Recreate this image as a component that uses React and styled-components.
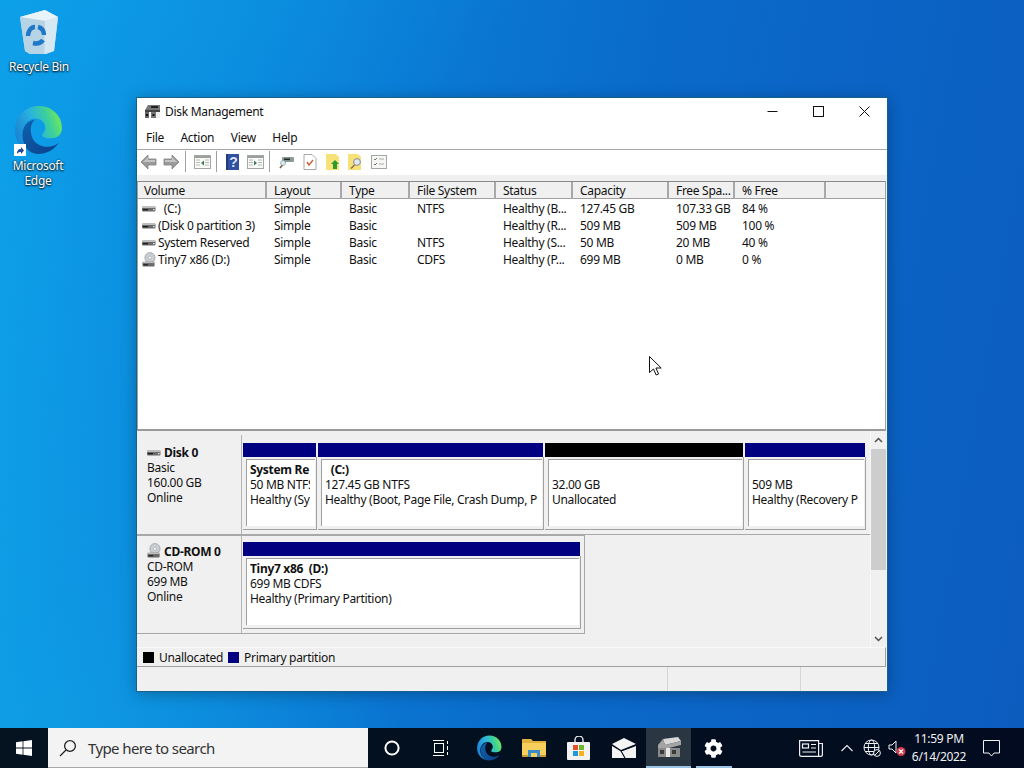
import React from 'react';
import styled, { createGlobalStyle } from 'styled-components';
import { FaCog } from 'react-icons/fa';

const GlobalStyle = createGlobalStyle`
  html, body { margin: 0; padding: 0; overflow: hidden; }
  * { box-sizing: border-box; }
`;

const UI_FONT = `"Noto Sans", "Open Sans", "Liberation Sans", sans-serif`;

const Desktop = styled.div`
  position: relative;
  width: 1024px;
  height: 768px;
  overflow: hidden;
  display: flex;
  flex-direction: column;
  font-family: ${UI_FONT};
  font-size: 12px;
  letter-spacing: -0.3px;
  color: #111;
  background:
    linear-gradient(128deg, rgba(20, 190, 240, 0.32) 0%, rgba(20, 190, 240, 0) 32%),
    linear-gradient(62deg, rgba(20, 175, 235, 0.55) 0%, rgba(20, 175, 235, 0) 30%),
    linear-gradient(100deg, #0a92e6 0%, #0a86dc 22%, #0a6aca 58%, #0c5cbe 100%);
`;

const Wallpaper = styled.div`
  flex: 1;
`;

const DesktopItem = styled.div`
  position: absolute;
  left: ${(p) => p.$x}px;
  top: ${(p) => p.$y}px;
  width: 76px;
  display: flex;
  flex-direction: column;
  align-items: center;
  text-align: center;
  color: #fff;
  line-height: 15px;
  text-shadow: 0 1px 2px rgba(0, 0, 0, 0.9), 0 0 2px rgba(0, 0, 0, 0.7);
`;

const BinLabel = styled.div`
  margin-top: 4px;
`;

const EdgeWrap = styled.div`
  position: relative;
  height: 52px;
  margin-bottom: 1px;
`;

const ShortcutBadge = styled.span`
  position: absolute;
  left: 1px;
  bottom: 1px;
  width: 12px;
  height: 12px;
  background: #fff;
  display: flex;
`;

const Window = styled.div`
  position: absolute;
  left: 136px;
  top: 97px;
  width: 752px;
  height: 595px;
  border: 1px solid #17618f;
  background: #f0f0f0;
  display: flex;
  flex-direction: column;
  box-shadow: 0 2px 14px rgba(0, 0, 0, 0.28);
`;

const TitleBar = styled.div`
  height: 27px;
  flex: none;
  background: #fff;
  display: flex;
  align-items: center;
  padding-left: 7px;
`;

const TitleText = styled.div`
  flex: 1;
  margin-left: 4px;
`;

const WinButton = styled.div`
  width: 46px;
  height: 27px;
  display: flex;
  align-items: center;
  justify-content: center;
`;

const MenuBar = styled.div`
  height: 25px;
  flex: none;
  background: #fff;
  border-bottom: 1px solid #a8a8a8;
  display: flex;
  align-items: center;
  gap: 16.5px;
  padding: 0 0 0 9px;
`;

const ToolBar = styled.div`
  height: 25px;
  flex: none;
  background: #fff;
  display: flex;
  align-items: center;
  padding: 0 0 2px 0;
`;

const Tool = styled.div`
  width: 23px;
  height: 22px;
  display: flex;
  align-items: center;
  justify-content: center;
`;

const ToolSep = styled.div`
  width: 1px;
  height: 21px;
  background: #a0a0a0;
  margin: 0 ${(p) => p.$after}px 0 ${(p) => p.$before}px;
`;

const ToolGap = styled.div`
  height: 6px;
  flex: none;
`;

const ListPane = styled.div`
  height: 250px;
  flex: none;
  background: #fff;
  border-top: 1px solid #8a8a8a;
  border-bottom: 2px solid #9a9a9a;
  border-right: 1px solid #a0a0a0;
  border-left: 1px solid #a0a0a0;
  margin-right: 1px;
`;

const COLUMNS = '129px 75px 68px 86px 77px 96px 66px 91px 1fr';

const HeaderRow = styled.div`
  display: grid;
  grid-template-columns: ${COLUMNS};
  height: 17px;
  background: #f0f0f0;
  border-bottom: 1px solid #a0a0a0;
  margin-bottom: 1px;
`;

const HeaderCell = styled.div`
  padding-left: 7px;
  line-height: 17px;
  border-right: 2px solid #a8a8a8;
  &:first-child { padding-left: 6px; }
  &:last-child { border-right: none; }
`;

const Row = styled.div`
  display: grid;
  grid-template-columns: ${COLUMNS};
  height: 17px;
  line-height: 17px;
`;

const Cell = styled.div`
  padding-left: 7px;
  white-space: pre;
  overflow: hidden;
`;

const VolumeCell = styled.div`
  display: flex;
  align-items: center;
  gap: 2px;
  padding-left: 4px;
  white-space: pre;
`;

const DiskArea = styled.div`
  height: 216px;
  flex: none;
  display: flex;
  padding-right: 1px;
`;

const DiskRows = styled.div`
  flex: 1;
  padding-top: 4px;
  display: flex;
  flex-direction: column;
`;

const DiskRow = styled.div`
  height: ${(p) => p.$height}px;
  flex: none;
  display: flex;
  border-bottom: 1px solid #a8a8a8;
  ${(p) => p.$partial && 'width: 448px; border-right: 1px solid #a8a8a8; border-top: 1px solid #a8a8a8;'}
`;

const DiskLabel = styled.div`
  width: 105px;
  flex: none;
  padding: ${(p) => p.$top}px 0 0 10px;
  border-right: 1px solid #b4b4b4;
  line-height: 15px;
`;

const DiskName = styled.div`
  display: flex;
  align-items: flex-end;
  gap: 3px;
  height: 15px;
  font-weight: 700;
`;

const Partitions = styled.div`
  display: flex;
  padding: ${(p) => p.$top}px 0 0 1px;
`;

const Partition = styled.div`
  width: ${(p) => p.$width}px;
  flex: none;
  display: flex;
  flex-direction: column;
`;

const PartitionBar = styled.div`
  height: 14px;
  flex: none;
  margin-right: 2px;
  background: ${(p) => (p.$free ? '#000' : '#000080')};
`;

const PartitionBody = styled.div`
  height: ${(p) => p.$height}px;
  margin-right: 1px;
  padding: 2px 1px 3px 3px;
  border-right: 1px solid #a0a0a0;
  border-bottom: 1px solid #a0a0a0;
`;

const PartitionBox = styled.div`
  height: 100%;
  background: #fff;
  border-top: 1px solid #a0a0a0;
  border-left: 1px solid #a0a0a0;
  padding: 2px 5px 0 3px;
`;

const PartitionText = styled.div`
  line-height: 15px;
  white-space: pre;
  overflow: hidden;
`;

const Bold = styled.div`
  font-weight: 700;
  height: 15px;
`;

const Scrollbar = styled.div`
  width: 16px;
  flex: none;
  display: flex;
  flex-direction: column;
  border-left: 1px solid #f8f8f8;
`;

const ScrollButton = styled.div`
  height: ${(p) => p.$height}px;
  display: flex;
  align-items: center;
  justify-content: center;
`;

const ScrollThumb = styled.div`
  height: 121px;
  background: #cdcdcd;
`;

const ScrollTrack = styled.div`
  flex: 1;
`;

const Legend = styled.div`
  height: 20px;
  flex: none;
  margin-right: 1px;
  border-top: 1px solid #fafafa;
  border-bottom: 1px solid #a0a0a0;
  border-right: 1px solid #a0a0a0;
  display: flex;
  align-items: center;
  padding-left: 6px;
`;

const Swatch = styled.span`
  width: 11px;
  height: 11px;
  background: ${(p) => p.$color};
  margin-right: 5px;
`;

const LegendText = styled.span`
  margin-right: 5px;
`;

const StatusBar = styled.div`
  flex: 1;
  display: grid;
  grid-template-columns: 530px 133px 1fr;
`;

const StatusCell = styled.div`
  border-left: ${(p) => (p.$first ? 'none' : '1px solid #d6d6d6')};
`;

const Taskbar = styled.div`
  height: 40px;
  flex: none;
  display: flex;
  background: linear-gradient(90deg, #04131f 0%, #03101f 50%, #020b20 100%);
  color: #fff;
`;

const StartButton = styled.div`
  width: 48px;
  display: flex;
  align-items: center;
  justify-content: center;
`;

const SearchBox = styled.div`
  width: 320px;
  background: #f3f3f3;
  border-bottom: 1px solid #a8a8a8;
  display: flex;
  align-items: center;
  padding-left: 11px;
  gap: 11px;
  color: #333;
  font-size: 15px;
  letter-spacing: -0.6px;
`;

const TaskTile = styled.div`
  position: relative;
  width: ${(p) => p.$width || 45}px;
  display: flex;
  align-items: center;
  justify-content: center;
  background: ${(p) => (p.$active ? '#2a3642' : 'transparent')};
  margin-left: ${(p) => p.$left || 0}px;
  &::after {
    content: ${(p) => (p.$running ? '""' : 'none')};
    position: absolute;
    left: ${(p) => (p.$active ? 0 : 5)}px;
    right: ${(p) => (p.$active ? 0 : 4)}px;
    bottom: 0;
    height: 2px;
    background: #9cc4e4;
  }
`;

const Spacer = styled.div`
  flex: 1;
`;

const TrayItem = styled.div`
  width: ${(p) => p.$width}px;
  display: flex;
  align-items: center;
  justify-content: center;
`;

const Clock = styled.div`
  width: 60px;
  text-align: center;
  line-height: 18px;
  padding-top: 2px;
  color: #f0f0f0;
  white-space: nowrap;
`;

const TrayEnd = styled.div`
  width: 10px;
`;

const Cursor = styled.svg`
  position: absolute;
  left: 649px;
  top: 356px;
`;

const volumes = [
  ['  (C:)', 'Simple', 'Basic', 'NTFS', 'Healthy (B...', '127.45 GB', '107.33 GB', '84 %'],
  ['(Disk 0 partition 3)', 'Simple', 'Basic', '', 'Healthy (R...', '509 MB', '509 MB', '100 %'],
  ['System Reserved', 'Simple', 'Basic', 'NTFS', 'Healthy (S...', '50 MB', '20 MB', '40 %'],
  ['Tiny7 x86 (D:)', 'Simple', 'Basic', 'CDFS', 'Healthy (P...', '699 MB', '0 MB', '0 %'],
];

const headers = ['Volume', 'Layout', 'Type', 'File System', 'Status', 'Capacity', 'Free Spa...', '% Free', ''];

const diskZero = [
  { width: 75, title: 'System Re', lines: ['50 MB NTFS', 'Healthy (Sy'] },
  { width: 227, title: '  (C:)', lines: ['127.45 GB NTFS', 'Healthy (Boot, Page File, Crash Dump, P'] },
  { width: 200, free: true, title: '', lines: ['32.00 GB', 'Unallocated'] },
  { width: 122, title: '', lines: ['509 MB', 'Healthy (Recovery P'] },
];

const DriveIcon = ({ size = 14 }) => (
  <svg width={size} height={size} viewBox="0 0 14 14">
    <rect x="0" y="4.5" width="13.5" height="5" rx="1" fill="#6a6a6a" />
    <rect x="0" y="4.5" width="13.5" height="1.4" fill="#c8c8c8" />
    <rect x="1" y="7" width="5" height="1.3" fill="#1c1c1c" />
    <rect x="11" y="7" width="1.5" height="1.2" fill="#e8e8e8" />
  </svg>
);

const CdDriveIcon = () => (
  <svg width="14" height="16" viewBox="0 0 15 17">
    <circle cx="8.5" cy="6" r="5.5" fill="#c9ced2" stroke="#8d9499" strokeWidth="0.7" />
    <circle cx="8.5" cy="6" r="1.6" fill="#fff" stroke="#888" strokeWidth="0.5" />
    <rect x="0.5" y="10.5" width="13" height="5" rx="1" fill="#6a6a6a" />
    <rect x="0.5" y="10.5" width="13" height="1.3" fill="#bdbdbd" />
    <rect x="1.5" y="13" width="5" height="1.3" fill="#1c1c1c" />
  </svg>
);

const AppIcon = () => (
  <svg width="17" height="16" viewBox="0 0 17 16">
    <path d="M4 1h12v5H1z" fill="#777" />
    <rect x="7" y="2" width="7" height="2" fill="#222" />
    <rect x="1" y="6" width="15" height="2" fill="#444" />
    <rect x="1" y="8" width="4" height="6" fill="#666" />
    <rect x="5" y="8" width="2" height="6" fill="#fff" />
    <rect x="7" y="8" width="5" height="6" fill="#777" />
    <rect x="2" y="10" width="2" height="2" fill="#111" />
    <rect x="8.5" y="10" width="2" height="2" fill="#111" />
    <rect x="12" y="8" width="4" height="6" fill="#eee" />
  </svg>
);

const ArrowTool = ({ flip }) => (
  <svg width="17" height="16" viewBox="0 0 17 16" style={flip ? { transform: 'scaleX(-1)' } : undefined}>
    <path d="M8 1L1 8l7 7v-4h8V5H8z" fill="#9a9a9a" stroke="#808080" strokeWidth="0.8" />
    <path d="M8 3L3 8h12V6H8z" fill="#c4c4c4" />
  </svg>
);

const PaneTool = ({ right }) => (
  <svg width="17" height="14" viewBox="0 0 17 14">
    <rect x="0.5" y="0.5" width="16" height="13" fill="#fafbf8" stroke="#a4a8a4" />
    <rect x="1" y="1" width="15" height="2" fill="#9ca09c" />
    <path d="M2 5h4M2 7.5h4M2 10h4M11 5h4M11 7.5h4M11 10h4" stroke="#b4bab0" strokeWidth="1" />
    <path d={right ? 'M7 5.5l3 2.5-3 2.5z' : 'M10 5.5L7 8l3 2.5z'} fill="#3f7a58" />
  </svg>
);

const HelpTool = () => (
  <svg width="14" height="16" viewBox="0 0 14 16">
    <rect x="0" y="0" width="13" height="16" fill="#31509f" />
    <rect x="0" y="0" width="2" height="16" fill="#223a80" />
    <text x="7.5" y="13" textAnchor="middle" fontSize="14" fontWeight="700" fontFamily="Liberation Sans, sans-serif" fill="#dfe6ff">?</text>
  </svg>
);

const ConnectTool = () => (
  <svg width="16" height="14" viewBox="0 0 16 14">
    <rect x="3" y="2" width="12" height="5" rx="1" fill="#8d9a9a" />
    <rect x="5" y="3.5" width="6" height="1.6" fill="#1f2a2a" />
    <path d="M1 13L6 7" stroke="#7a5a3a" strokeWidth="1.6" />
    <circle cx="4" cy="8" r="2.5" fill="#d8ecec" stroke="#789" strokeWidth="0.6" />
  </svg>
);

const CheckDocTool = () => (
  <svg width="14" height="16" viewBox="0 0 14 16">
    <path d="M1 .5h8l4 4v11H1z" fill="#fff" stroke="#a8a8a8" />
    <path d="M4 8l2 3 4-5" fill="none" stroke="#c8603a" strokeWidth="1.4" />
  </svg>
);

const FolderUpTool = () => (
  <svg width="14" height="16" viewBox="0 0 14 16">
    <path d="M0 0h10l3 3v13H0z" fill="#f7e27a" />
    <path d="M9 6l4 4h-2v5H7v-5H5z" fill="#2d9a2a" />
  </svg>
);

const FolderSearchTool = () => (
  <svg width="15" height="16" viewBox="0 0 15 16">
    <path d="M0 0h10l3 3v13H0z" fill="#f7e27a" />
    <circle cx="9" cy="8" r="3.4" fill="#e0e8f0" stroke="#888" />
    <path d="M6.5 11L3 14.5" stroke="#8a7050" strokeWidth="1.6" />
  </svg>
);

const ChecklistTool = () => (
  <svg width="16" height="14" viewBox="0 0 16 14">
    <rect x="0.5" y="0.5" width="15" height="13" fill="#f6f7f4" stroke="#a4a8a4" />
    <path d="M3 4l1 1 2-2M3 9l1 1 2-2" fill="none" stroke="#6a7a6a" />
    <path d="M8 4h5M8 9h5" stroke="#a8aca8" />
  </svg>
);

const WindowGlyph = ({ kind }) => (
  <svg width="11" height="11" viewBox="0 0 11 11" fill="none" stroke="#111" strokeWidth="1">
    {kind === 'min' && <path d="M0.5 5.5h10" />}
    {kind === 'max' && <rect x="0.5" y="0.5" width="10" height="10" />}
    {kind === 'close' && <path d="M0.5 0.5l10 10M10.5 0.5l-10 10" />}
  </svg>
);

const ScrollArrow = ({ down }) => (
  <svg width="9" height="6" viewBox="0 0 9 6" fill="none" stroke="#505050" strokeWidth="1.5">
    <path d={down ? 'M1 1l3.5 3.5L8 1' : 'M1 5l3.5-3.5L8 5'} />
  </svg>
);

const EdgeLogo = ({ size, id }) => (
  <svg width={size} height={size} viewBox="0 0 48 48">
    <defs>
      <linearGradient id={`${id}-ring`} x1="0" y1="0.7" x2="1" y2="0.35">
        <stop offset="0" stopColor="#1a7fd0" />
        <stop offset="0.45" stopColor="#2ab2e0" />
        <stop offset="0.75" stopColor="#3ccf9c" />
        <stop offset="1" stopColor="#70e85c" />
      </linearGradient>
      <linearGradient id={`${id}-core`} x1="0" y1="0" x2="1" y2="1">
        <stop offset="0" stopColor="#1162ae" />
        <stop offset="1" stopColor="#0b3f8a" />
      </linearGradient>
    </defs>
    <path
      d="M2 25C2 11 12 1 25 1c13 0 22 10 22 21 0 7-5 10-11 10-4 0-8-1-8-3 0-2 3-3 3-7 0-5-4-9-10-9C13 13 8 21 8 29c0 8 5 14 12 17C10 45 2 36 2 25z"
      fill={`url(#${id}-ring)`}
    />
    <path
      d="M9 29c0-8 5-14 12-15-4 4-5 10-3 16 2 7 10 11 17 10 4-.5 7-2 9-4-4 7-12 11-20 11-9 0-15-9-15-18z"
      fill={`url(#${id}-core)`}
    />
  </svg>
);

const RecycleBin = () => (
  <svg width="40" height="46" viewBox="0 0 40 46">
    <path d="M1 8L26 1l13 7-4 34-8 3H11l-5-3z" fill="#c3dcec" />
    <path d="M1 8l25 4 13-4-13-7z" fill="#e8f4fa" />
    <path d="M1 8l25 4-2 33H11l-5-3z" fill="#b6d4e6" />
    <path d="M26 12l13-4-4 34-9 3z" fill="#d6e8f2" />
    <g fill="none" stroke="#1f78c8" strokeWidth="4.4">
      <path d="M9 27c0-5 3-9 7-9" />
      <path d="M19 18c4 1 6 4 6 8" />
      <path d="M24 31c-2 3-6 4-10 3" />
    </g>
  </svg>
);

const ShortcutArrow = () => (
  <svg width="12" height="12" viewBox="0 0 12 12">
    <path d="M3 10c0-3 1-5 4-5V3l3 3.5L7 10V8c-2 0-3 .5-4 2z" fill="#1f4a9a" />
  </svg>
);

const WindowsLogo = () => (
  <svg width="16" height="16" viewBox="0 0 16 16" fill="#fff">
    <path d="M0 2.2l6.6-.9v6.3H0zM7.4 1.2L16 0v7.6H7.4zM0 8.4h6.6v6.3L0 13.8zM7.4 8.4H16V16l-8.6-1.2z" />
  </svg>
);

const SearchGlyph = () => (
  <svg width="18" height="18" viewBox="0 0 18 18" fill="none" stroke="#222" strokeWidth="1.3">
    <circle cx="11" cy="7" r="5.4" />
    <path d="M7 11l-6 6" />
  </svg>
);

const CortanaGlyph = () => (
  <svg width="16" height="16" viewBox="0 0 16 16" fill="none" stroke="#fff" strokeWidth="2">
    <circle cx="8" cy="8" r="6.6" />
  </svg>
);

const TaskViewGlyph = () => (
  <svg width="17" height="16" viewBox="0 0 17 16" fill="none" stroke="#fff" strokeWidth="1">
    <path d="M1 .5h11M1 15.5h11" />
    <rect x="2.5" y="3.5" width="9" height="9" />
    <path d="M15.5 1v3M15.5 6v4M15.5 12v3" />
  </svg>
);

const FolderGlyph = () => (
  <svg width="24" height="20" viewBox="0 0 24 20">
    <path d="M0 1h9l2 2h13v3H0z" fill="#e2b23c" />
    <rect y="5" width="24" height="14" fill="#f6cf5c" />
    <path d="M6 19v-7h12v7h-3v-4H9v4z" fill="#3a8cc8" />
    <rect y="17" width="6" height="2" fill="#c89a3a" />
    <rect x="18" y="17" width="6" height="2" fill="#c89a3a" />
  </svg>
);

const StoreGlyph = () => (
  <svg width="24" height="24" viewBox="0 0 24 24">
    <path d="M8 6V4a4 4 0 018 0v2" fill="none" stroke="#e8e8e8" strokeWidth="1.4" />
    <rect y="6" width="23" height="18" rx="1" fill="#f2f2f2" />
    <rect x="6" y="9" width="5" height="5" fill="#e8502c" />
    <rect x="12" y="9" width="5" height="5" fill="#6cb82c" />
    <rect x="6" y="15" width="5" height="5" fill="#1c9ae0" />
    <rect x="12" y="15" width="5" height="5" fill="#f4b41c" />
  </svg>
);

const MailGlyph = () => (
  <svg width="24" height="20" viewBox="0 0 24 20">
    <path d="M0 6L12 0l12 6-15 6z" fill="#f4f4f4" />
    <path d="M0 8l9 5.5L24 8v12H0z" fill="#f4f4f4" />
    <path d="M9 13l15-6M9 13l4 7" fill="none" stroke="#0a1420" strokeWidth="1.2" />
  </svg>
);

const DiskAppGlyph = () => (
  <svg width="24" height="22" viewBox="0 0 24 22">
    <path d="M6 2L21 0l3 4-16 4z" fill="#d8d8d8" />
    <path d="M1 8l5-6 2 6 16-4v4L8 12H1z" fill="#a4a4a4" />
    <rect x="1" y="11" width="22" height="9" fill="#8a8a8a" />
    <rect x="9" y="11" width="4" height="9" fill="#e8e8e8" />
    <rect x="3" y="13" width="4" height="4" fill="#3a3a3a" />
    <rect x="15" y="13" width="4" height="4" fill="#3a3a3a" />
  </svg>
);

const NewsGlyph = () => (
  <svg width="24" height="17" viewBox="0 0 24 17" fill="none" stroke="#f0f0f0" strokeWidth="1.2">
    <path d="M.6.6h19v15.8H2.5A1.9 1.9 0 01.6 14.5z" />
    <path d="M19.6 3.5h3.8v11a1.9 1.9 0 01-1.9 1.9h-2" />
    <rect x="3.5" y="4" width="6" height="4" />
    <path d="M12 4.5h5M12 8h5M3.5 12h13.5" />
  </svg>
);

const ChevronGlyph = () => (
  <svg width="12" height="8" viewBox="0 0 12 8" fill="none" stroke="#f0f0f0" strokeWidth="1.1">
    <path d="M.5 7L6 1.5 11.5 7" />
  </svg>
);

const GlobeGlyph = () => (
  <svg width="18" height="18" viewBox="0 0 18 18" fill="none" stroke="#f0f0f0" strokeWidth="1">
    <circle cx="8.5" cy="8.5" r="7.5" />
    <ellipse cx="8.5" cy="8.5" rx="3.2" ry="7.5" />
    <path d="M1 8.5h15M2 4.5h13M2 12.5h13" />
    <circle cx="14" cy="14" r="3.4" fill="#04101f" />
    <path d="M11.8 16.2l4.4-4.4" />
  </svg>
);

const SpeakerGlyph = () => (
  <svg width="18" height="18" viewBox="0 0 18 18">
    <path d="M1 6h3l4-4v12l-4-4H1z" fill="none" stroke="#f0f0f0" strokeWidth="1" />
    <circle cx="13" cy="12.5" r="4.5" fill="#d13a4a" />
    <path d="M11 10.5l4 4M15 10.5l-4 4" stroke="#fff" strokeWidth="1.2" />
  </svg>
);

const NotificationGlyph = () => (
  <svg width="17" height="17" viewBox="0 0 17 17" fill="none" stroke="#f0f0f0" strokeWidth="1">
    <path d="M.5.5h16v12.5H11l-2.5 3-2.5-3H.5z" />
  </svg>
);

const App = () => (
  <Desktop>
    <GlobalStyle />
    <Wallpaper />

    <DesktopItem $x={1} $y={9}>
      <RecycleBin />
      <BinLabel>Recycle Bin</BinLabel>
    </DesktopItem>
    <DesktopItem $x={0} $y={105}>
      <EdgeWrap>
        <EdgeLogo size={50} id="desk" />
        <ShortcutBadge><ShortcutArrow /></ShortcutBadge>
      </EdgeWrap>
      <div>Microsoft<br />Edge</div>
    </DesktopItem>

    <Window>
      <TitleBar>
        <AppIcon />
        <TitleText>Disk Management</TitleText>
        <WinButton><WindowGlyph kind="min" /></WinButton>
        <WinButton><WindowGlyph kind="max" /></WinButton>
        <WinButton><WindowGlyph kind="close" /></WinButton>
      </TitleBar>
      <MenuBar>
        <span>File</span>
        <span>Action</span>
        <span>View</span>
        <span>Help</span>
      </MenuBar>
      <ToolBar>
        <Tool><ArrowTool /></Tool>
        <Tool><ArrowTool flip /></Tool>
        <ToolSep $before={2} $after={5} />
        <Tool><PaneTool /></Tool>
        <ToolSep $before={2} $after={4} />
        <Tool><HelpTool /></Tool>
        <Tool><PaneTool right /></Tool>
        <ToolSep $before={2} $after={5} />
        <Tool><ConnectTool /></Tool>
        <Tool><CheckDocTool /></Tool>
        <Tool><FolderUpTool /></Tool>
        <Tool><FolderSearchTool /></Tool>
        <Tool><ChecklistTool /></Tool>
      </ToolBar>
      <ToolGap />
      <ListPane>
        <HeaderRow>
          {headers.map((h, i) => <HeaderCell key={i}>{h}</HeaderCell>)}
        </HeaderRow>
        {volumes.map((v, i) => (
          <Row key={i}>
            <VolumeCell>
              {i === 3 ? <CdDriveIcon /> : <DriveIcon />}
              {v[0]}
            </VolumeCell>
            <Cell>{v[1]}</Cell>
            <Cell>{v[2]}</Cell>
            <Cell>{v[3]}</Cell>
            <Cell>{v[4]}</Cell>
            <Cell>{v[5]}</Cell>
            <Cell>{v[6]}</Cell>
            <Cell>{v[7]}</Cell>
          </Row>
        ))}
      </ListPane>
      <DiskArea>
        <DiskRows>
          <DiskRow $height={100}>
            <DiskLabel $top={10}>
              <DiskName><DriveIcon />Disk 0</DiskName>
              <div>Basic</div>
              <div>160.00 GB</div>
              <div>Online</div>
            </DiskLabel>
            <Partitions $top={8}>
              {diskZero.map((p, i) => (
                <Partition key={i} $width={p.width}>
                  <PartitionBar $free={p.free} />
                  <PartitionBody $height={73}>
                    <PartitionBox>
                      <PartitionText>
                        <Bold>{p.title}</Bold>
                        {p.lines.map((l) => <div key={l}>{l}</div>)}
                      </PartitionText>
                    </PartitionBox>
                  </PartitionBody>
                </Partition>
              ))}
            </Partitions>
          </DiskRow>
          <DiskRow $height={99} $partial>
            <DiskLabel $top={8}>
              <DiskName><CdDriveIcon />CD-ROM 0</DiskName>
              <div>CD-ROM</div>
              <div>699 MB</div>
              <div>Online</div>
            </DiskLabel>
            <Partitions $top={6}>
              <Partition $width={339}>
                <PartitionBar />
                <PartitionBody $height={73}>
                  <PartitionBox>
                    <PartitionText>
                      <Bold>Tiny7 x86  (D:)</Bold>
                      <div>699 MB CDFS</div>
                      <div>Healthy (Primary Partition)</div>
                    </PartitionText>
                  </PartitionBox>
                </PartitionBody>
              </Partition>
            </Partitions>
          </DiskRow>
        </DiskRows>
        <Scrollbar>
          <ScrollButton $height={18}><ScrollArrow /></ScrollButton>
          <ScrollThumb />
          <ScrollTrack />
          <ScrollButton $height={17}><ScrollArrow down /></ScrollButton>
        </Scrollbar>
      </DiskArea>
      <Legend>
        <Swatch $color="#000" />
        <LegendText>Unallocated</LegendText>
        <Swatch $color="#000080" />
        <LegendText>Primary partition</LegendText>
      </Legend>
      <StatusBar>
        <StatusCell $first />
        <StatusCell />
        <StatusCell />
      </StatusBar>
    </Window>

    <Cursor width="13" height="20" viewBox="0 0 13 20">
      <path d="M.5.5v16l4-3.5 2.7 6 2.4-1-2.7-6h5.3z" fill="#fff" stroke="#111" strokeWidth="1" />
    </Cursor>

    <Taskbar>
      <StartButton><WindowsLogo /></StartButton>
      <SearchBox>
        <SearchGlyph />
        <span>Type here to search</span>
      </SearchBox>
      <TaskTile $width={48}><CortanaGlyph /></TaskTile>
      <TaskTile $width={48}><TaskViewGlyph /></TaskTile>
      <TaskTile $left={2}><EdgeLogo size={26} id="task" /></TaskTile>
      <TaskTile><FolderGlyph /></TaskTile>
      <TaskTile><StoreGlyph /></TaskTile>
      <TaskTile><MailGlyph /></TaskTile>
      <TaskTile $active $running><DiskAppGlyph /></TaskTile>
      <TaskTile $running><FaCog size={19} color="#fff" /></TaskTile>
      <Spacer />
      <TrayItem $width={46}><NewsGlyph /></TrayItem>
      <TrayItem $width={25}><ChevronGlyph /></TrayItem>
      <TrayItem $width={26}><GlobeGlyph /></TrayItem>
      <TrayItem $width={24}><SpeakerGlyph /></TrayItem>
      <Clock>
        <div>11:59 PM</div>
        <div>6/14/2022</div>
      </Clock>
      <TrayItem $width={45}><NotificationGlyph /></TrayItem>
      <TrayEnd />
    </Taskbar>
  </Desktop>
);

export default App;
